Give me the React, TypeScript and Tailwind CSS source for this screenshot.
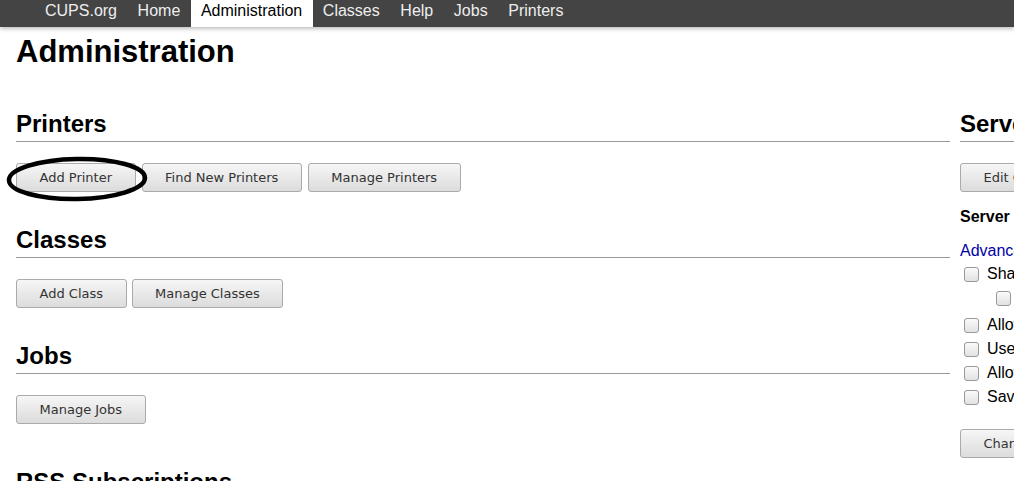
import React from 'react'

const sans = { fontFamily: '"Liberation Sans", Arial, sans-serif' }
const btnFont = { fontFamily: '"DejaVu Sans", sans-serif' }

function Button({ label }: { label: string }) {
  return (
    <button
      className="h-[29px] px-[22.5px] rounded-[3px] border border-[#aaa] bg-gradient-to-b from-[#f6f6f6] to-[#dcdcdc] text-[13px] text-[#333] whitespace-nowrap"
      style={btnFont}
    >
      {label}
    </button>
  )
}

function Heading({ title }: { title: string }) {
  return (
    <div className="border-b border-[#999] pb-[3px]">
      <h2 className="text-[24px] font-bold leading-[28px] text-black whitespace-nowrap">{title}</h2>
    </div>
  )
}

function Check({ label, indent = false }: { label: string; indent?: boolean }) {
  return (
    <div className={`flex items-center h-[24px] gap-[8px] ${indent ? 'pl-[36px] mb-[3px]' : 'pl-[4px]'}`}>
      <span className="w-[15px] h-[15px] shrink-0 rounded-[3px] border border-[#999] bg-gradient-to-b from-[#fafafa] to-[#e2e2e2]" />
      <span className="text-[16px] text-black whitespace-nowrap">{label}</span>
    </div>
  )
}

const navItems = ['CUPS.org', 'Home', 'Administration', 'Classes', 'Help', 'Jobs', 'Printers']

export default function App() {
  return (
    <div className="w-[1014px] h-[481px] overflow-hidden bg-white" style={sans}>
      {/* Nav */}
      <div className="h-[27px] bg-[#444] flex pl-[34.7px] shadow-[0_2px_4px_rgba(0,0,0,0.25)] relative z-10">
        {navItems.map((item) => (
          <div
            key={item}
            className={`px-[10.3px] h-[27px] leading-[22px] text-[16px] ${
              item === 'Administration' ? 'bg-white text-black' : 'text-[#eee]'
            }`}
          >
            {item}
          </div>
        ))}
      </div>

      <div className="pl-[16px] mt-[7px]">
        <h1 className="text-[31px] font-bold leading-[36px] text-black">Administration</h1>
      </div>

      <div className="flex pl-[16px] gap-[10px] mt-[40px]">
        {/* Left column */}
        <div className="w-[934px] shrink-0">
          <Heading title="Printers" />
          <div className="relative flex gap-[6px] mt-[21px]">
            <Button label="Add Printer" />
            <Button label="Find New Printers" />
            <Button label="Manage Printers" />
            <svg
              className="absolute left-[-10px] top-[-7px]"
              width="142"
              height="46"
              viewBox="0 0 142 46"
            >
              <ellipse
                cx="71"
                cy="23"
                rx="68"
                ry="20"
                fill="none"
                stroke="black"
                strokeWidth="4.5"
                transform="rotate(-1 71 23)"
              />
            </svg>
          </div>

          <div className="mt-[34px]">
            <Heading title="Classes" />
          </div>
          <div className="flex gap-[5px] mt-[21px]">
            <Button label="Add Class" />
            <Button label="Manage Classes" />
          </div>

          <div className="mt-[34px]">
            <Heading title="Jobs" />
          </div>
          <div className="flex gap-[5px] mt-[21px]">
            <Button label="Manage Jobs" />
          </div>

          <div className="mt-[44px]">
            <Heading title="RSS Subscriptions" />
          </div>
        </div>

        {/* Right column */}
        <div className="w-[420px] shrink-0">
          <Heading title="Server" />
          <div className="mt-[21px]">
            <Button label="Edit Configuration File" />
          </div>
          <div className="mt-[15px] text-[16px] font-bold leading-[20px]">Server Settings:</div>
          <div className="mt-[14px] text-[16px] text-[#0000aa] leading-[20px]">Advanced</div>
          <div className="mt-[1px]">
            <Check label="Share printers connected to this system" />
            <Check label="Allow printing from the Internet" indent />
            <Check label="Allow remote administration" />
            <Check label="Use Kerberos authentication (FAQ)" />
            <Check label="Allow users to cancel any job (not just their own)" />
            <Check label="Save debugging information for troubleshooting" />
          </div>
          <div className="mt-[20px]">
            <Button label="Change Settings" />
          </div>
        </div>
      </div>
    </div>
  )
}
